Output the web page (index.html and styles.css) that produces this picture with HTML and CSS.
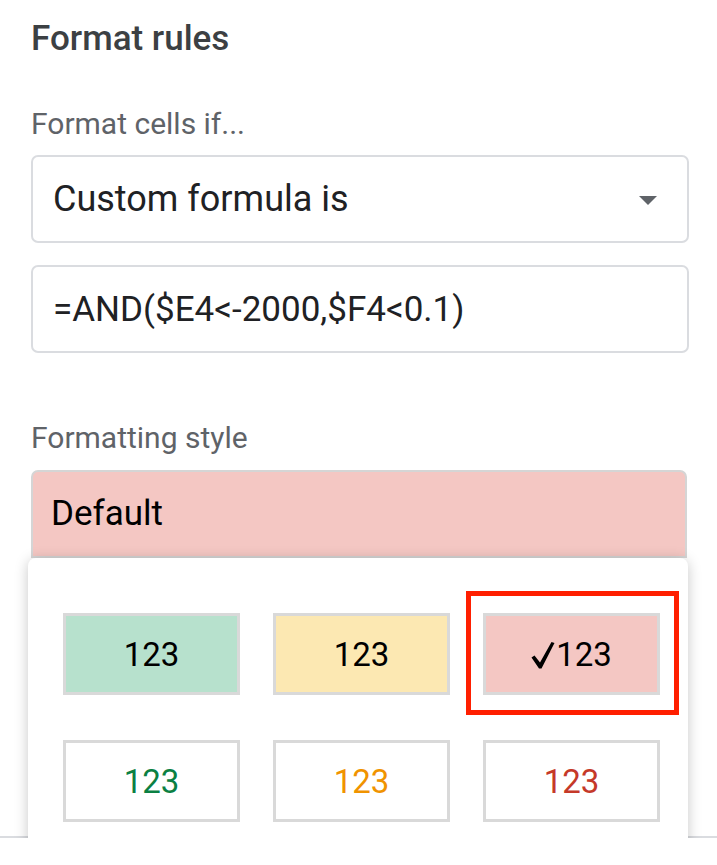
FILE: index.html
```html
<!DOCTYPE html>
<html lang="en">
<head>
    <meta charset="UTF-8">
    <title>Format rules</title>
    <link rel="stylesheet" href="styles.css">
</head>
<body>
    <div class="panel">
        <h1 class="title">Format rules</h1>

        <div class="label">Format cells if...</div>
        <div class="field select">
            <span>Custom formula is</span>
            <svg class="caret" width="18" height="9" viewBox="0 0 18 9"><path d="M0 0h18L9 9z" fill="#5f6368"/></svg>
        </div>
        <div class="field formula">=AND($E4&lt;-2000,$F4&lt;0.1)</div>

        <div class="label label-style">Formatting style</div>
        <div class="style-picker">
            <div class="style-current">Default</div>

            <!-- swatch menu, open over the rest of the panel -->
            <div class="style-menu">
                <div class="swatches">
                    <div class="swatch fill-green">123</div>
                    <div class="swatch fill-yellow">123</div>
                    <div class="swatch fill-red selected">
                        <svg class="check" width="24" height="28" viewBox="0 0 24 28"><path d="M0.5 16.5 L3.5 14.5 L9 21.5 L20.5 1 L23.5 2 L10.5 27.5 L8 27.5 Z" fill="#000"/></svg>123
                    </div>
                    <div class="swatch text-green">123</div>
                    <div class="swatch text-yellow">123</div>
                    <div class="swatch text-red">123</div>
                </div>
            </div>
            <div class="highlight"></div>
        </div>
    </div>
    <div class="divider"></div>
</body>
</html>
```

FILE: styles.css
```css
body {
    margin: 0;
    background: #fff;
    font-family: Roboto, "Liberation Sans", sans-serif;
    overflow: hidden;
}

.panel {
    padding: 0 28px 0 31px;
}

.title {
    margin: 0;
    padding-top: 16px;
    height: 45px;
    font-size: 35px;
    font-weight: 500;
    line-height: 45px;
    color: #3c4043;
}

.label {
    margin-top: 45px;
    height: 49px;
    font-size: 30px;
    line-height: 36px;
    color: #5f6368;
}

.label-style {
    margin-top: 67px;
    height: 42px;
}

.field {
    box-sizing: border-box;
    height: 88px;
    display: flex;
    align-items: center;
    padding: 0 20px;
    border: 2px solid #dadce0;
    border-radius: 7px;
    font-size: 36px;
    color: #202124;
}

.select {
    justify-content: space-between;
    padding-right: 30px;
}

.formula {
    margin-top: 22px;
    font-size: 35px;
}

.caret {
    margin-top: 2px;
}

.style-picker {
    position: relative;
    margin-top: 8px;
}

.style-current {
    box-sizing: border-box;
    height: 88px;
    margin-right: 2px;
    padding: 21px 18px 0;
    background: #f4c7c3;
    border: 2px solid #d5d5d5;
    border-radius: 7px 7px 0 0;
    font-size: 35px;
    color: #000;
}

.style-menu {
    position: absolute;
    top: 88px;
    left: -3px;
    width: 660px;
    height: 330px;
    background: #fff;
    border-radius: 8px 8px 0 0;
    box-shadow: 0 2px 14px rgba(0, 0, 0, 0.22);
    z-index: 2;
}

.swatches {
    display: grid;
    grid-template-columns: repeat(3, 177px);
    grid-auto-rows: 82px;
    column-gap: 33px;
    row-gap: 45px;
    padding: 55px 35px 0;
}

.swatch {
    box-sizing: border-box;
    display: flex;
    align-items: center;
    justify-content: center;
    border: 3px solid #d9d9d9;
    font-size: 33px;
    color: #000;
}

.fill-green { background: #b7e1cd; }
.fill-yellow { background: #fce8b2; }
.fill-red { background: #f4c7c3; }
.text-green { color: #0b8043; }
.text-yellow { color: #f09300; }
.text-red { color: #c53929; }

.check {
    margin: 2px 1px 0 0;
}

.highlight {
    position: absolute;
    top: 121px;
    left: 435px;
    width: 203px;
    height: 114px;
    border: 5px solid #ff1f00;
    z-index: 3;
}

.divider {
    margin-top: 278px;
    height: 2px;
    background: #dadce0;
}
```
